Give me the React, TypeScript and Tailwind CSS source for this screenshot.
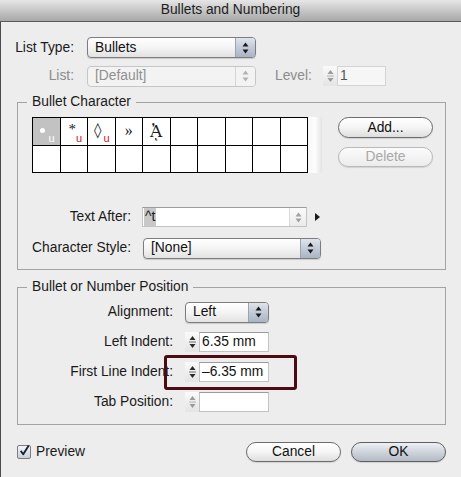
import type { ReactNode } from "react";

// small up/down arrows used in popups and steppers
const Arrows = ({ color = "#1a1a1a", gap = 2 }: { color?: string; gap?: number }) => (
  <svg width="7" height={10 + gap} viewBox={`0 0 7 ${10 + gap}`}>
    <path d="M3.5 0.5 L6.5 4.5 L0.5 4.5 Z" fill={color} />
    <path d={`M3.5 ${9.5 + gap} L6.5 ${5.5 + gap} L0.5 ${5.5 + gap} Z`} fill={color} />
  </svg>
);

const Popup = ({
  text,
  className,
  disabled,
}: {
  text: string;
  className: string;
  disabled?: boolean;
}) => (
  <div
    className={`flex h-[21px] items-stretch overflow-hidden rounded-[4px] border ${
      disabled
        ? "border-[#c6c6c6] bg-[#f3f3f3] text-[#8f8f8f]"
        : "border-[#7d7d7d] bg-linear-to-b from-[#ffffff] via-[#f4f4f4] to-[#e2e2e2] text-[#111] shadow-[0_1px_1px_rgba(0,0,0,0.15)]"
    } ${className}`}
  >
    <div className="flex flex-1 items-center pl-[7px] leading-none">{text}</div>
    <div
      className={`flex w-[20px] items-center justify-center border-l ${
        disabled
          ? "border-[#d6d6d6] bg-[#f3f3f3]"
          : "border-[#9aa3b0] bg-linear-to-b from-[#dfe4ec] via-[#c3cbd8] to-[#aab4c4]"
      }`}
    >
      <Arrows color={disabled ? "#b3b3b3" : "#1a1a1a"} />
    </div>
  </div>
);

const Stepper = ({ disabled }: { disabled?: boolean }) => (
  <div className="flex h-[20px] w-[14px] flex-col items-center justify-center bg-linear-to-b from-[#fafafa] to-[#e4e4e4]">
    <svg width="9" height="16" viewBox="0 0 9 16">
      <path d="M4.5 2 L7.5 6 L1.5 6 Z" fill={disabled ? "#9a9a9a" : "#2a2a2a"} />
      <line x1="1" y1="8" x2="8" y2="8" stroke={disabled ? "#b0b0b0" : "#6a6a6a"} />
      <path d="M4.5 14 L7.5 10 L1.5 10 Z" fill={disabled ? "#9a9a9a" : "#2a2a2a"} />
    </svg>
  </div>
);

const Field = ({ value, className }: { value?: string; className: string }) => (
  <div
    className={`flex h-[20px] items-center border border-[#c3c3c3] border-t-[#9c9c9c] bg-white pl-[2px] leading-none text-[#111] ${className}`}
  >
    {value}
  </div>
);

const Button = ({
  children,
  className,
  variant = "normal",
}: {
  children: ReactNode;
  className: string;
  variant?: "normal" | "default" | "disabled";
}) => {
  const look =
    variant === "default"
      ? "border-[#5e5e5e] bg-linear-to-b from-[#eef0f3] via-[#cfd4dc] to-[#b4bbc6] text-[#111]"
      : variant === "disabled"
        ? "border-[#b9b9b9] bg-linear-to-b from-[#fbfbfb] to-[#ececec] text-[#a8a8a8]"
        : "border-[#6c6c6c] bg-linear-to-b from-[#ffffff] via-[#f5f5f5] to-[#dedede] text-[#111]";
  return (
    <div
      className={`flex items-center justify-center rounded-full border leading-none shadow-[0_1px_1px_rgba(0,0,0,0.12)] ${look} ${className}`}
    >
      {children}
    </div>
  );
};

const RedU = ({ color = "#d01818" }: { color?: string }) => (
  <span
    className="absolute right-[5px] bottom-[1px] font-['Liberation_Sans'] text-[11px] leading-none"
    style={{ color }}
  >
    u
  </span>
);

const Cell = ({ children, className = "" }: { children?: ReactNode; className?: string }) => (
  <div className={`relative flex items-center justify-center border-r border-b border-black ${className}`}>
    {children}
  </div>
);

const Label = ({ children, className }: { children: ReactNode; className: string }) => (
  <div className={`shrink-0 text-right leading-none ${className}`}>{children}</div>
);

export default function App() {
  return (
    <div className="relative h-[477px] w-[461px] overflow-hidden bg-[#ededed] font-['Liberation_Sans',Arial,sans-serif] text-[13.8px] text-[#1a1a1a]">
      {/* Title bar */}
      <div className="flex h-[22px] items-center justify-center border-b border-[#5a5a5a] bg-linear-to-b from-[#e6e6e6] to-[#a8a8a8] text-[13.8px] text-[#1e1e1e]">
        Bullets and Numbering
      </div>

      <div className="h-[455px] border-l border-[#4a4a4a] pt-[15px]">
        {/* List Type */}
        <div className="flex h-[21px] items-center">
          <Label className="w-[73px]">List Type:</Label>
          <Popup text="Bullets" className="ml-[13px] w-[169px]" />
        </div>

        {/* List / Level */}
        <div className="mt-[8px] flex h-[20px] items-center text-[#8c8c8c]">
          <Label className="w-[73px]">List:</Label>
          <Popup text="[Default]" className="ml-[13px] h-[20px] w-[169px]" disabled />
          <div className="ml-[19px] w-[48px] leading-none">Level:</div>
          <Stepper disabled />
          <div className="flex h-[20px] w-[49px] items-center border border-[#d4d4d4] bg-[#f6f6f6] pl-[2px] leading-none text-[#555]">
            1
          </div>
        </div>

        {/* Bullet Character */}
        <fieldset className="mt-[8px] ml-[16px] w-[429px] border border-[#a3a3a3] px-[9px] pb-[11px]">
          <legend className="px-[5px] leading-[16px]">Bullet Character</legend>
          <div className="pl-[5px]">
            <div className="mt-[7px] flex h-[56px]">
              <div className="grid h-[56px] w-[276px] grid-cols-10 grid-rows-2 border-t border-l border-black bg-white">
                <Cell className="bg-[#c2c2c2]">
                  <span className="absolute top-[10px] left-[7px] h-[5px] w-[5px] rounded-full bg-white" />
                  <RedU color="#ffffff" />
                </Cell>
                <Cell>
                  <span className="absolute top-[4px] left-[8px] font-['Liberation_Serif'] text-[15px] leading-none">*</span>
                  <RedU />
                </Cell>
                <Cell>
                  <span className="absolute top-[5px] left-[6px] font-['DejaVu_Sans'] text-[15px] leading-none">◊</span>
                  <RedU />
                </Cell>
                <Cell>
                  <span className="font-['Liberation_Serif'] text-[16px] leading-none">»</span>
                </Cell>
                <Cell>
                  <span className="font-['DejaVu_Serif'] text-[17px] leading-none">{"Ἀ\u0345"}</span>
                </Cell>
                {Array.from({ length: 15 }).map((_, i) => (
                  <Cell key={i} />
                ))}
              </div>
              <div className="h-[56px] w-[14px] bg-linear-to-r from-[#f7f7f7] via-[#fdfdfd] to-[#e4e4e4]" />
              <div className="ml-[16px] flex flex-col">
                <Button className="h-[21px] w-[95px]">Add...</Button>
                <Button className="mt-[9px] h-[20px] w-[95px]" variant="disabled">
                  Delete
                </Button>
              </div>
            </div>

            {/* Text After */}
            <div className="mt-[34px] flex h-[20px] items-center">
              <Label className="w-[99px]">Text After:</Label>
              <div className="ml-[11px] flex h-[20px] w-[165px] items-stretch border border-[#c3c3c3] border-t-[#9c9c9c] bg-white">
                <div className="flex flex-1 items-center pl-[1px] leading-none">
                  <span className="bg-[#c8c8c8] px-[1px] py-[2px]">^t</span>
                </div>
                <div className="flex w-[17px] items-center justify-center border-l border-[#d9d9d9] bg-linear-to-b from-[#fbfbfb] to-[#ebebeb]">
                  <Arrows color="#a0a0a0" gap={1} />
                </div>
              </div>
              <svg className="ml-[8px]" width="5" height="8" viewBox="0 0 5 8">
                <path d="M0 0 L5 4 L0 8 Z" fill="#1a1a1a" />
              </svg>
            </div>

            {/* Character Style */}
            <div className="mt-[11px] flex h-[20px] items-center">
              <Label className="w-[99px]">Character Style:</Label>
              <Popup text="[None]" className="ml-[12px] h-[20px] w-[178px]" />
            </div>
          </div>
        </fieldset>

        {/* Bullet or Number Position */}
        <fieldset className="mt-[9px] ml-[16px] w-[429px] border border-[#a3a3a3] px-[9px] pb-[12px]">
          <legend className="px-[5px] leading-[16px]">Bullet or Number Position</legend>
          <div className="pl-[5px]">
            <div className="mt-[7px] flex h-[20px] items-center">
              <Label className="w-[141px]">Alignment:</Label>
              <Popup text="Left" className="ml-[12px] h-[20px] w-[84px]" />
            </div>
            <div className="mt-[10px] flex h-[20px] items-center">
              <Label className="w-[141px]">Left Indent:</Label>
              <div className="ml-[12px] flex">
                <Stepper />
                <Field value="6.35 mm" className="w-[70px]" />
              </div>
            </div>
            <div className="mt-[10px] flex h-[20px] items-center">
              <Label className="w-[141px]">First Line Indent:</Label>
              <div className="ml-[12px] flex">
                <Stepper />
                <Field value="–6.35 mm" className="w-[70px]" />
              </div>
            </div>
            <div className="mt-[10px] flex h-[20px] items-center">
              <Label className="w-[141px]">Tab Position:</Label>
              <div className="ml-[12px] flex">
                <Stepper disabled />
                <Field className="w-[70px]" />
              </div>
            </div>
          </div>
        </fieldset>

        {/* Footer */}
        <div className="mt-[17px] flex h-[20px] items-center pr-[15px]">
          <div className="ml-[16px] flex h-[14px] w-[14px] items-center justify-center rounded-[2px] border border-[#7c7c7c] bg-linear-to-b from-[#f4f6fa] to-[#c9d0db]">
            <svg width="13" height="13" viewBox="0 0 13 13" className="-mt-[3px] ml-[1px]">
              <path d="M2 7 L5 11 L11.5 0.5" fill="none" stroke="#1b2333" strokeWidth="2.2" strokeLinejoin="round" />
            </svg>
          </div>
          <span className="ml-[5px] leading-none">Preview</span>
          <div className="ml-auto flex gap-[10px]">
            <Button className="h-[20px] w-[95px]">Cancel</Button>
            <Button className="h-[20px] w-[95px]" variant="default">
              OK
            </Button>
          </div>
        </div>
      </div>

      {/* annotation box drawn over the dialog */}
      <div className="pointer-events-none absolute top-[355px] left-[164px] h-[35px] w-[133px] rounded-[3px] border-[3px] border-[#4a0c12]" />
    </div>
  );
}
